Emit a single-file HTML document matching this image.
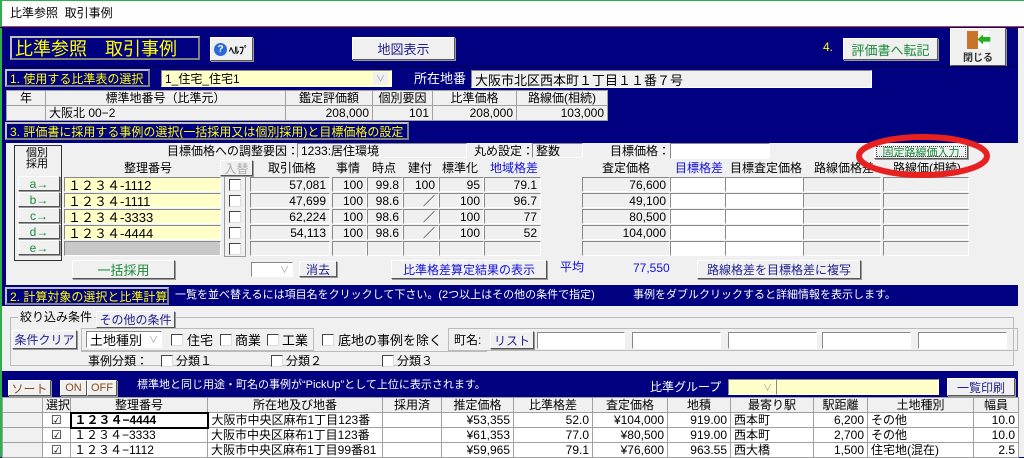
<!DOCTYPE html>
<html><head><meta charset="utf-8"><style>
*{box-sizing:border-box;margin:0;padding:0}
body{width:1024px;height:457px;overflow:hidden;position:relative;background:#000080;font-family:"Liberation Sans","Noto Sans CJK JP",sans-serif;font-size:12px;color:#000}
.a{position:absolute;white-space:nowrap;line-height:1}
.btn{position:absolute;background:#f0f0f0;border:1px solid;border-color:#fff #555 #555 #fff;box-shadow:1px 1px 0 #999;display:flex;align-items:center;justify-content:center;white-space:nowrap}
.f{position:absolute;background:#f0f0f0;border:1px solid;border-color:#888 #fff #fff #888;white-space:nowrap;overflow:hidden;display:flex;align-items:center;padding:0 3px}
.r{justify-content:flex-end}
.w{background:#fff}
.y{background:#ffffc8}
.lb{position:absolute;background:#000080;border:2px solid;border-color:#c0c0c0 #808080 #808080 #c0c0c0;color:#ffff00;display:flex;align-items:center;padding-left:3px;white-space:nowrap;overflow:hidden}
.cb{position:absolute;width:12px;height:12px;background:#fff;border:1px solid;border-color:#444 #ddd #ddd #444}
.g{color:#1a8a3a}
.b{color:#1010e0}
.nb{color:#202090}
.t td{border:1px solid #a0a0a0;height:15px;padding:0 3px;white-space:nowrap;overflow:hidden}
</style></head><body>
<div class="a" style="left:0;top:0;width:1024px;height:27px;background:#fff;border-left:2px solid #2db04a;border-top:1px solid #2db04a;border-bottom:1px solid #c04040"></div>
<div class="a" style="left:10px;top:7px;font-size:12px">比準参照&nbsp; 取引事例</div>
<div class="a" style="left:0;top:28px;width:2px;height:429px;background:#2db04a"></div>
<div class="a" style="left:1018px;top:28px;width:6px;height:429px;background:#f0f0f0"></div>

<div class="lb" style="left:10px;top:36px;width:190px;height:24px;font-size:18px">比準参照　取引事例</div>
<div class="btn" style="left:210px;top:37px;width:43px;height:24px;font-size:10px;font-weight:bold"><span style="display:inline-block;width:13px;height:13px;border-radius:50%;background:#2a6ad8;color:#fff;font-size:10px;text-align:center;line-height:13px;margin-right:2px">?</span>ﾍﾙﾌﾟ</div>
<div class="btn nb" style="left:352px;top:37px;width:103px;height:23px;font-size:13px">地図表示</div>
<div class="a" style="left:823px;top:41px;color:#ffff00;font-size:12px">4.</div>
<div class="btn g" style="left:843px;top:38px;width:95px;height:22px;font-size:13px">評価書へ転記</div>
<div class="btn" style="left:950px;top:28px;width:56px;height:38px;flex-direction:column;font-size:10px;font-weight:bold;color:#333"><span style="display:block;width:22px;height:18px;background:linear-gradient(90deg,#c8742a 50%,#fff 50%);position:relative"><span style="position:absolute;left:10px;top:3px;color:#20b020;font-size:14px;line-height:12px">⬅</span></span>閉じる</div>
<div class="a" style="left:2px;top:66px;width:1016px;height:1px;background:#000040"></div>

<div class="lb" style="left:5px;top:69px;width:145px;height:18px;font-size:12px">1. 使用する比準表の選択</div>
<div class="f y" style="left:161px;top:70px;width:231px;height:17px">1_住宅_住宅1<span style="margin-left:auto;width:15px;height:13px;background:#f0f0f0;color:#999;font-size:9px;text-align:center">∨</span></div>
<div class="a" style="left:414px;top:72px;color:#fff;font-size:13px">所在地番</div>
<div class="f" style="left:471px;top:70px;width:401px;height:18px;font-size:13px">大阪市北区西本町１丁目１１番７号</div>

<table class="a t" style="left:6px;top:90px;border-collapse:collapse;background:#f0f0f0;font-size:12px">
<tr style="text-align:center"><td style="width:39px;height:14px">年</td><td style="width:240px">標準地番号（比準元）</td><td style="width:87px">鑑定評価額</td><td style="width:60px">個別要因</td><td style="width:84px">比準価格</td><td style="width:91px">路線価(相続)</td></tr>
<tr><td style="height:14px"></td><td>大阪北 00−2</td><td style="text-align:right">208,000</td><td style="text-align:right">101</td><td style="text-align:right">208,000</td><td style="text-align:right">103,000</td></tr>
</table>

<div class="lb" style="left:5px;top:122px;width:404px;height:18px;font-size:12px">3. 評価書に採用する事例の選択(一括採用又は個別採用)と目標価格の設定</div>

<div class="a" style="left:6px;top:143px;width:1012px;height:142px;background:#f0f0f0"></div>
<div class="a" style="left:14px;top:145px;width:48px;height:116px;border:1px solid #333"></div>
<div class="a" style="left:26px;top:148px;font-size:11px;line-height:11px;text-align:center">個別<br>採用</div>
<div class="btn g" style="left:18px;top:176px;width:42px;height:15px">a→</div>
<div class="btn g" style="left:18px;top:192px;width:42px;height:15px">b→</div>
<div class="btn g" style="left:18px;top:208px;width:42px;height:15px">c→</div>
<div class="btn g" style="left:18px;top:224px;width:42px;height:15px">d→</div>
<div class="btn g" style="left:18px;top:240px;width:42px;height:15px">e→</div>

<div class="a" style="left:167px;top:145px;font-size:12px">目標価格への調整要因：</div>
<div class="f" style="left:297px;top:143px;width:170px;height:15px">1233:居住環境</div>
<div class="a" style="left:474px;top:145px">丸め設定：</div>
<div class="f" style="left:532px;top:143px;width:51px;height:15px">整数</div>
<div class="a" style="left:610px;top:145px">目標価格：</div>
<div class="f w" style="left:670px;top:143px;width:100px;height:16px"></div>
<div class="btn g" style="left:874px;top:144px;width:94px;height:15px;outline:1px dotted #444;outline-offset:-3px;font-size:11px">固定路線価入力</div>

<div class="a" style="left:124px;top:162px;font-size:12px">整理番号</div>
<div class="btn" style="left:220px;top:160px;width:33px;height:16px;color:#aaa">入替</div>
<div class="a" style="left:268px;top:162px">取引価格</div>
<div class="a" style="left:336px;top:162px">事情</div>
<div class="a" style="left:372px;top:162px">時点</div>
<div class="a" style="left:408px;top:162px">建付</div>
<div class="a" style="left:442px;top:162px">標準化</div>
<div class="a b" style="left:490px;top:162px">地域格差</div>
<div class="a" style="left:602px;top:162px">査定価格</div>
<div class="a b" style="left:675px;top:162px">目標格差</div>
<div class="a" style="left:730px;top:162px">目標査定価格</div>
<div class="a" style="left:814px;top:162px">路線価格差</div>
<div class="a" style="left:893px;top:162px">路線価(相続)</div>

<div class="f y" style="left:64px;top:177px;width:157px;height:15px;font-size:13px">１２３４-1112</div>
<div class="f y" style="left:64px;top:193px;width:157px;height:15px;font-size:13px">１２３４-1111</div>
<div class="f y" style="left:64px;top:209px;width:157px;height:15px;font-size:13px">１２３４-3333</div>
<div class="f y" style="left:64px;top:225px;width:157px;height:15px;font-size:13px">１２３４-4444</div>
<div class="f" style="left:64px;top:241px;width:157px;height:15px;background:#c8c8c8"></div>
<div class="a" style="left:224px;top:176px;width:22px;height:81px;border:1px solid #999"></div>
<div class="cb" style="left:229px;top:179px"></div><div class="cb" style="left:229px;top:195px"></div><div class="cb" style="left:229px;top:211px"></div><div class="cb" style="left:229px;top:227px"></div><div class="cb" style="left:229px;top:243px"></div>

<div class="f r" style="left:250px;top:177px;width:80px;height:15px">57,081</div>
<div class="f r" style="left:250px;top:193px;width:80px;height:15px">47,699</div>
<div class="f r" style="left:250px;top:209px;width:80px;height:15px">62,224</div>
<div class="f r" style="left:250px;top:225px;width:80px;height:15px">54,113</div>
<div class="f r" style="left:250px;top:241px;width:80px;height:15px"></div>
<div class="f r" style="left:332px;top:177px;width:35px;height:15px">100</div>
<div class="f r" style="left:332px;top:193px;width:35px;height:15px">100</div>
<div class="f r" style="left:332px;top:209px;width:35px;height:15px">100</div>
<div class="f r" style="left:332px;top:225px;width:35px;height:15px">100</div>
<div class="f r" style="left:332px;top:241px;width:35px;height:15px"></div>
<div class="f r" style="left:367px;top:177px;width:36px;height:15px">99.8</div>
<div class="f r" style="left:367px;top:193px;width:36px;height:15px">98.6</div>
<div class="f r" style="left:367px;top:209px;width:36px;height:15px">98.6</div>
<div class="f r" style="left:367px;top:225px;width:36px;height:15px">98.6</div>
<div class="f r" style="left:367px;top:241px;width:36px;height:15px"></div>
<div class="f r" style="left:403px;top:177px;width:36px;height:15px">100</div>
<div class="f r" style="left:403px;top:193px;width:36px;height:15px">／</div>
<div class="f r" style="left:403px;top:209px;width:36px;height:15px">／</div>
<div class="f r" style="left:403px;top:225px;width:36px;height:15px">／</div>
<div class="f r" style="left:403px;top:241px;width:36px;height:15px"></div>
<div class="f r" style="left:439px;top:177px;width:45px;height:15px">95</div>
<div class="f r" style="left:439px;top:193px;width:45px;height:15px">100</div>
<div class="f r" style="left:439px;top:209px;width:45px;height:15px">100</div>
<div class="f r" style="left:439px;top:225px;width:45px;height:15px">100</div>
<div class="f r" style="left:439px;top:241px;width:45px;height:15px"></div>
<div class="f r" style="left:484px;top:177px;width:57px;height:15px">79.1</div>
<div class="f r" style="left:484px;top:193px;width:57px;height:15px">96.7</div>
<div class="f r" style="left:484px;top:209px;width:57px;height:15px">77</div>
<div class="f r" style="left:484px;top:225px;width:57px;height:15px">52</div>
<div class="f r" style="left:484px;top:241px;width:57px;height:15px"></div>
<div class="f r" style="left:582px;top:177px;width:88px;height:15px">76,600</div>
<div class="f r" style="left:582px;top:193px;width:88px;height:15px">49,100</div>
<div class="f r" style="left:582px;top:209px;width:88px;height:15px">80,500</div>
<div class="f r" style="left:582px;top:225px;width:88px;height:15px">104,000</div>
<div class="f r" style="left:582px;top:241px;width:88px;height:15px"></div>
<div class="f w" style="left:670px;top:177px;width:55px;height:15px"></div>
<div class="f w" style="left:670px;top:193px;width:55px;height:15px"></div>
<div class="f w" style="left:670px;top:209px;width:55px;height:15px"></div>
<div class="f w" style="left:670px;top:225px;width:55px;height:15px"></div>
<div class="f w" style="left:670px;top:241px;width:55px;height:15px"></div>
<div class="f w" style="left:725px;top:177px;width:78px;height:15px"></div>
<div class="f w" style="left:725px;top:193px;width:78px;height:15px"></div>
<div class="f w" style="left:725px;top:209px;width:78px;height:15px"></div>
<div class="f w" style="left:725px;top:225px;width:78px;height:15px"></div>
<div class="f w" style="left:725px;top:241px;width:78px;height:15px"></div>
<div class="f" style="left:803px;top:177px;width:78px;height:15px"></div>
<div class="f" style="left:803px;top:193px;width:78px;height:15px"></div>
<div class="f" style="left:803px;top:209px;width:78px;height:15px"></div>
<div class="f" style="left:803px;top:225px;width:78px;height:15px"></div>
<div class="f" style="left:803px;top:241px;width:78px;height:15px"></div>
<div class="f" style="left:883px;top:177px;width:86px;height:15px"></div>
<div class="f" style="left:883px;top:193px;width:86px;height:15px"></div>
<div class="f" style="left:883px;top:209px;width:86px;height:15px"></div>
<div class="f" style="left:883px;top:225px;width:86px;height:15px"></div>
<div class="f" style="left:883px;top:241px;width:86px;height:15px"></div>

<div class="btn g" style="left:72px;top:260px;width:103px;height:19px;font-size:13px">一括採用</div>
<div class="f w" style="left:251px;top:262px;width:42px;height:15px"><span style="margin-left:auto;color:#999;font-size:9px">∨</span></div>
<div class="btn nb" style="left:299px;top:261px;width:38px;height:16px;font-size:12px">消去</div>
<div class="btn b" style="left:391px;top:260px;width:156px;height:19px;font-size:12px">比準格差算定結果の表示</div>
<div class="a b" style="left:560px;top:261px;font-size:12px">平均</div>
<div class="a b" style="left:633px;top:262px;font-size:12px">77,550</div>
<div class="btn nb" style="left:697px;top:260px;width:164px;height:19px;font-size:12px">路線格差を目標格差に複写</div>

<svg class="a" style="left:855px;top:130px" width="140" height="52"><ellipse cx="68" cy="26" rx="64" ry="19" fill="none" stroke="#e82020" stroke-width="6"/></svg>

<div class="lb" style="left:5px;top:287px;width:164px;height:18px;font-size:12px">2. 計算対象の選択と比準計算</div>
<div class="a" style="left:175px;top:290px;color:#fff;font-size:11px">一覧を並べ替えるには項目名をクリックして下さい。(2つ以上はその他の条件で指定)</div>
<div class="a" style="left:633px;top:290px;color:#fff;font-size:11px">事例をダブルクリックすると詳細情報を表示します。</div>

<div class="a" style="left:2px;top:306px;width:1016px;height:65px;background:#f0f0f0"></div>
<div class="a" style="left:10px;top:317px;width:1004px;height:49px;border:1px solid #bbb"></div>
<div class="a" style="left:18px;top:311px;background:#f0f0f0;padding:0 2px;font-size:12px">絞り込み条件</div>
<div class="btn nb" style="left:96px;top:311px;width:79px;height:17px;font-size:12px">その他の条件</div>
<div class="btn nb" style="left:12px;top:330px;width:65px;height:19px;font-size:12px">条件クリア</div>
<div class="a" style="left:81px;top:328px;width:233px;height:23px;border:1px solid #bbb"></div>
<div class="f w" style="left:86px;top:331px;width:76px;height:17px;font-size:13px">土地種別<span style="margin-left:auto;color:#999;font-size:9px">∨</span></div>
<div class="cb" style="left:171px;top:334px"></div><div class="a" style="left:187px;top:334px;font-size:13px">住宅</div>
<div class="cb" style="left:220px;top:334px"></div><div class="a" style="left:235px;top:334px;font-size:13px">商業</div>
<div class="cb" style="left:267px;top:334px"></div><div class="a" style="left:282px;top:334px;font-size:13px">工業</div>
<div class="cb" style="left:322px;top:334px"></div><div class="a" style="left:338px;top:334px;font-size:13px">底地の事例を除く</div>
<div class="a" style="left:448px;top:328px;width:570px;height:23px;border:1px solid #bbb"></div>
<div class="a" style="left:454px;top:334px;font-size:12px">町名:</div>
<div class="btn nb" style="left:490px;top:331px;width:44px;height:18px;font-size:12px">リスト</div>
<div class="f w" style="left:537px;top:332px;width:88px;height:17px"></div>
<div class="f w" style="left:632px;top:332px;width:89px;height:17px"></div>
<div class="f w" style="left:728px;top:332px;width:89px;height:17px"></div>
<div class="f w" style="left:822px;top:332px;width:89px;height:17px"></div>
<div class="f w" style="left:918px;top:332px;width:89px;height:17px"></div>
<div class="a" style="left:81px;top:351px;width:406px;height:17px;border-top:1px solid #bbb"></div>
<div class="a" style="left:88px;top:355px;font-size:12px">事例分類：</div>
<div class="cb" style="left:161px;top:355px"></div><div class="a" style="left:176px;top:355px">分類１</div>
<div class="cb" style="left:271px;top:355px"></div><div class="a" style="left:286px;top:355px">分類２</div>
<div class="cb" style="left:382px;top:355px"></div><div class="a" style="left:397px;top:355px">分類３</div>

<div class="btn" style="left:8px;top:380px;width:43px;height:16px;color:#8a4a1a">ソート</div>
<div class="btn" style="left:60px;top:380px;width:27px;height:16px;color:#8a4a1a;font-size:11px">ON</div>
<div class="btn" style="left:87px;top:380px;width:30px;height:16px;color:#8a4a1a;font-size:11px">OFF</div>
<div class="a" style="left:137px;top:380px;color:#fff;font-size:11px">標準地と同じ用途・町名の事例が“PickUp”として上位に表示されます。</div>
<div class="a" style="left:650px;top:381px;color:#fff;font-size:12px">比準グループ</div>
<div class="f y" style="left:728px;top:379px;width:48px;height:16px"><span style="margin-left:auto;color:#999;font-size:9px">∨</span></div>
<div class="f y" style="left:776px;top:379px;width:163px;height:16px"></div>
<div class="btn nb" style="left:947px;top:378px;width:68px;height:18px;font-size:12px">一覧印刷</div>

<table class="a t" style="left:2px;top:397px;border-collapse:collapse;background:#fff;font-size:12px;table-layout:fixed;width:1016px">
<colgroup><col style="width:40px"><col style="width:28px"><col style="width:137px"><col style="width:175px"><col style="width:59px"><col style="width:72px"><col style="width:79px"><col style="width:75px"><col style="width:63px"><col style="width:83px"><col style="width:54px"><col style="width:106px"><col style="width:45px"></colgroup>
<tr style="text-align:center;background:#f0f0f0"><td></td><td>選択</td><td>整理番号</td><td>所在地及び地番</td><td>採用済</td><td>推定価格</td><td>比準格差</td><td>査定価格</td><td>地積</td><td>最寄り駅</td><td>駅距離</td><td>土地種別</td><td>幅員</td></tr>
<tr><td style="background:#f0f0f0"></td><td style="text-align:center">☑</td><td style="border:2px solid #000;font-weight:bold">１２３４−4444</td><td>大阪市中央区麻布1丁目123番</td><td></td><td style="text-align:right">¥53,355</td><td style="text-align:right">52.0</td><td style="text-align:right">¥104,000</td><td style="text-align:right">919.00</td><td>西本町</td><td style="text-align:right">6,200</td><td>その他</td><td style="text-align:right">10.0</td></tr>
<tr><td style="background:#f0f0f0"></td><td style="text-align:center">☑</td><td>１２３４−3333</td><td>大阪市中央区麻布1丁目123番</td><td></td><td style="text-align:right">¥61,353</td><td style="text-align:right">77.0</td><td style="text-align:right">¥80,500</td><td style="text-align:right">919.00</td><td>西本町</td><td style="text-align:right">2,700</td><td>その他</td><td style="text-align:right">10.0</td></tr>
<tr><td style="background:#f0f0f0"></td><td style="text-align:center">☑</td><td>１２３４−1112</td><td>大阪市中央区麻布1丁目99番81</td><td></td><td style="text-align:right">¥59,965</td><td style="text-align:right">79.1</td><td style="text-align:right">¥76,600</td><td style="text-align:right">963.55</td><td>西大橋</td><td style="text-align:right">1,500</td><td>住宅地(混在)</td><td style="text-align:right">2.5</td></tr>
</table>
</body></html>
